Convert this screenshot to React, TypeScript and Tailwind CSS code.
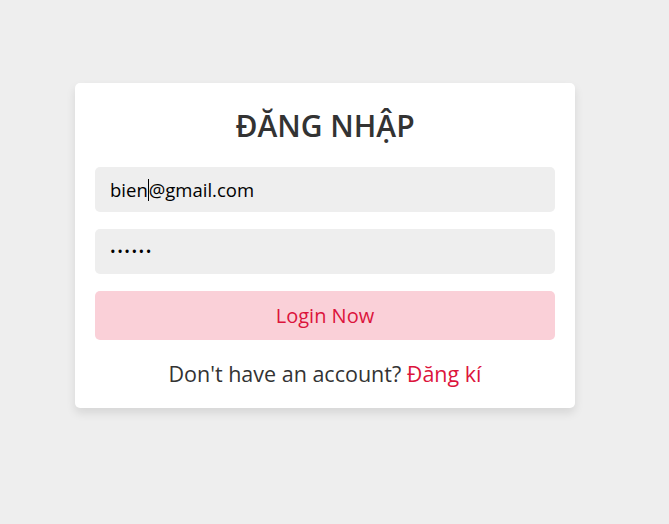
export default function App() {
  return (
    <div className="min-h-[524px] w-full bg-[#eeeeee] pt-[83px] pl-[75px]" style={{ fontFamily: '"Open Sans", sans-serif' }}>
      <form className="w-[500px] bg-white rounded-[5px] p-5 shadow-[0_5px_10px_rgba(0,0,0,0.1)] text-center">
        <h3 className="text-[30px] leading-[45px] font-semibold uppercase text-[#333] mb-[19px]">ĐĂNG NHẬP</h3>
        <div className="w-full h-[45px] bg-[#eeeeee] rounded-[5px] px-[15px] flex items-center text-[18.5px] text-black text-left">
          <span>bien</span><span className="inline-block w-px h-[22px] bg-black"></span><span>@gmail.com</span>
        </div>
        <div className="w-full h-[45px] bg-[#eeeeee] rounded-[5px] px-[15px] flex items-center text-[15px] text-black text-left mt-[17px] tracking-[1.5px]">
          ••••••
        </div>
        <div className="w-full h-[49px] bg-[#fad0d8] rounded-[5px] flex items-center justify-center text-[20px] text-[#dc143c] mt-[17px]">
          Login Now
        </div>
        <p className="mt-[20px] text-[21.5px] text-[#333] leading-[28px]">
          Don't have an account? <span className="text-[#dc143c]">Đăng kí</span>
        </p>
      </form>
    </div>
  );
}
